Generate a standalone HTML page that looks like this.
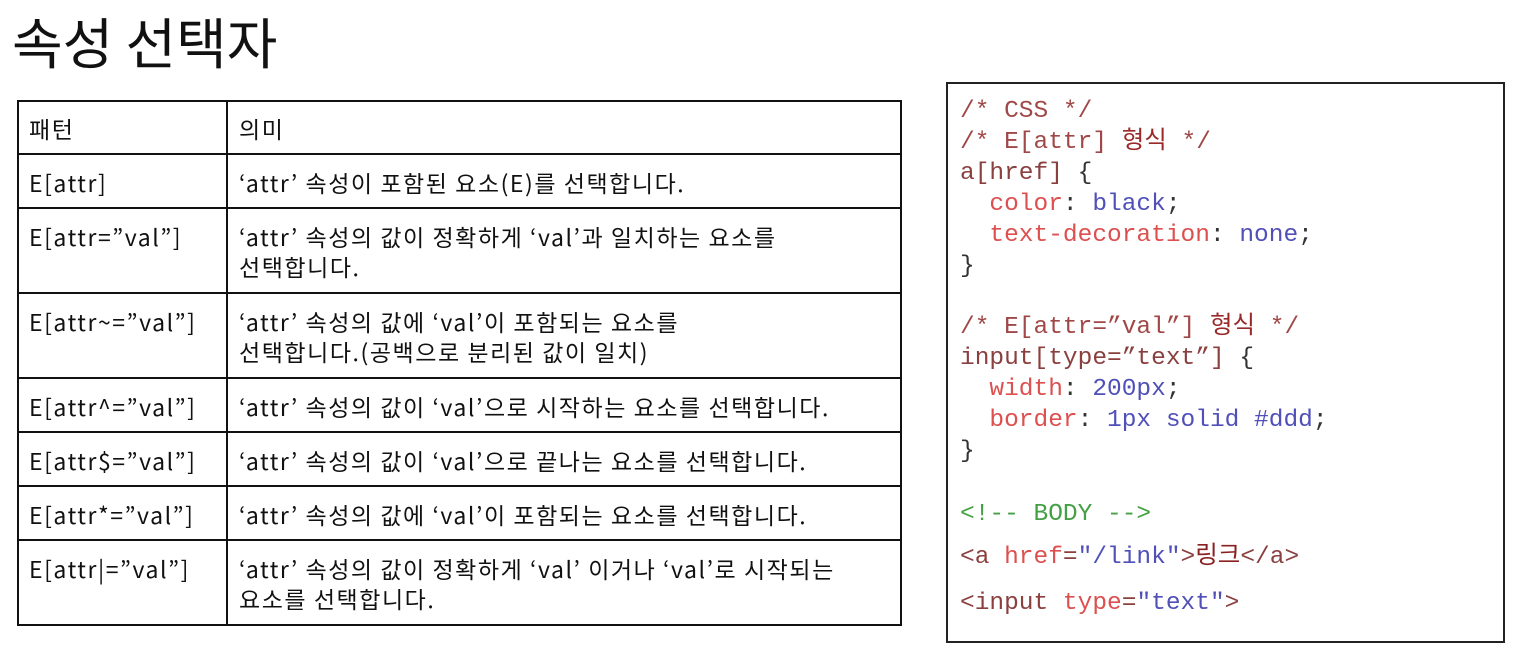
<!DOCTYPE html>
<html><head><meta charset="utf-8"><style>
body{margin:0;width:1524px;height:659px;background:#fff;position:relative;overflow:hidden;font-family:"Noto Sans CJK KR",sans-serif;color:#111}
.t{position:absolute;white-space:nowrap;font-size:23px;letter-spacing:1.55px;line-height:30px;font-family:"Noto Sans CJK KR",sans-serif}
.h{position:absolute;background:#111;height:2px;left:17px;width:885px}
.v{position:absolute;background:#111;width:2px;top:100px;height:526px}
.c{position:absolute;left:960px;font-family:"Liberation Mono","Noto Sans CJK KR",monospace;font-size:24.5px;line-height:30px;white-space:pre;color:#8b3030}
.cm{color:#a04848}.p{color:#dc5050}.vl{color:#5050b8}.k{color:#333}.g{color:#44a044}.s{color:#8b4040}
</style></head><body>
<div class="t" style="left:12px;top:6px;font-size:55px;line-height:68px;letter-spacing:0">속성 선택자</div>
<div class="h" style="top:100px"></div><div class="h" style="top:153px"></div><div class="h" style="top:207px"></div><div class="h" style="top:292px"></div><div class="h" style="top:377px"></div><div class="h" style="top:431px"></div><div class="h" style="top:485px"></div><div class="h" style="top:539px"></div><div class="h" style="top:624px"></div>
<div class="v" style="left:17px"></div><div class="v" style="left:226px"></div><div class="v" style="left:900px"></div>
<div class="t" style="left:29px;top:113px">패턴</div><div class="t" style="left:239px;top:113px">의미</div>
<div class="t" style="left:29px;top:167px">E[attr]</div><div class="t" style="left:239px;top:167px">‘attr’ 속성이 포함된 요소(E)를 선택합니다.</div>
<div class="t" style="left:29px;top:221px">E[attr=”val”]</div><div class="t" style="left:239px;top:221px">‘attr’ 속성의 값이 정확하게 ‘val’과 일치하는 요소를<br>선택합니다.</div>
<div class="t" style="left:29px;top:306px">E[attr~=”val”]</div><div class="t" style="left:239px;top:306px">‘attr’ 속성의 값에 ‘val’이 포함되는 요소를<br>선택합니다.(공백으로 분리된 값이 일치)</div>
<div class="t" style="left:29px;top:391px">E[attr^=”val”]</div><div class="t" style="left:239px;top:391px">‘attr’ 속성의 값이 ‘val’으로 시작하는 요소를 선택합니다.</div>
<div class="t" style="left:29px;top:445px">E[attr$=”val”]</div><div class="t" style="left:239px;top:445px">‘attr’ 속성의 값이 ‘val’으로 끝나는 요소를 선택합니다.</div>
<div class="t" style="left:29px;top:499px">E[attr*=”val”]</div><div class="t" style="left:239px;top:499px">‘attr’ 속성의 값에 ‘val’이 포함되는 요소를 선택합니다.</div>
<div class="t" style="left:29px;top:553px">E[attr|=”val”]</div><div class="t" style="left:239px;top:553px">‘attr’ 속성의 값이 정확하게 ‘val’ 이거나 ‘val’로 시작되는<br>요소를 선택합니다.</div>
<div style="position:absolute;left:946px;top:82px;width:555px;height:557px;border:2px solid #222"></div>
<div class="c cm" style="top:97px">/* CSS */</div>
<div class="c cm" style="top:128px">/* E[attr] <span style="color:#9a2a2a">형식</span> */</div>
<div class="c s" style="top:159px">a[href] <span class="k">{</span></div>
<div class="c" style="top:190px">  <span class="p">color</span><span class="k">:</span> <span class="vl">black</span><span class="k">;</span></div>
<div class="c" style="top:221px">  <span class="p">text-decoration</span><span class="k">:</span> <span class="vl">none</span><span class="k">;</span></div>
<div class="c k" style="top:252px">}</div>
<div class="c cm" style="top:313px">/* E[attr=”val”] <span style="color:#9a2a2a">형식</span> */</div>
<div class="c s" style="top:344px">input[type=”text”] <span class="k">{</span></div>
<div class="c" style="top:375px">  <span class="p">width</span><span class="k">:</span> <span class="vl">200px</span><span class="k">;</span></div>
<div class="c" style="top:406px">  <span class="p">border</span><span class="k">:</span> <span class="vl">1px solid #ddd</span><span class="k">;</span></div>
<div class="c k" style="top:437px">}</div>
<div class="c g" style="top:500px">&lt;!-- BODY --&gt;</div>
<div class="c s" style="top:543px">&lt;a <span class="p">href</span>=<span class="vl">"/link"</span>&gt;<span style="color:#8b2020">링크</span>&lt;/a&gt;</div>
<div class="c s" style="top:589px">&lt;input <span class="p">type</span>=<span class="vl">"text"</span>&gt;</div>
</body></html>
